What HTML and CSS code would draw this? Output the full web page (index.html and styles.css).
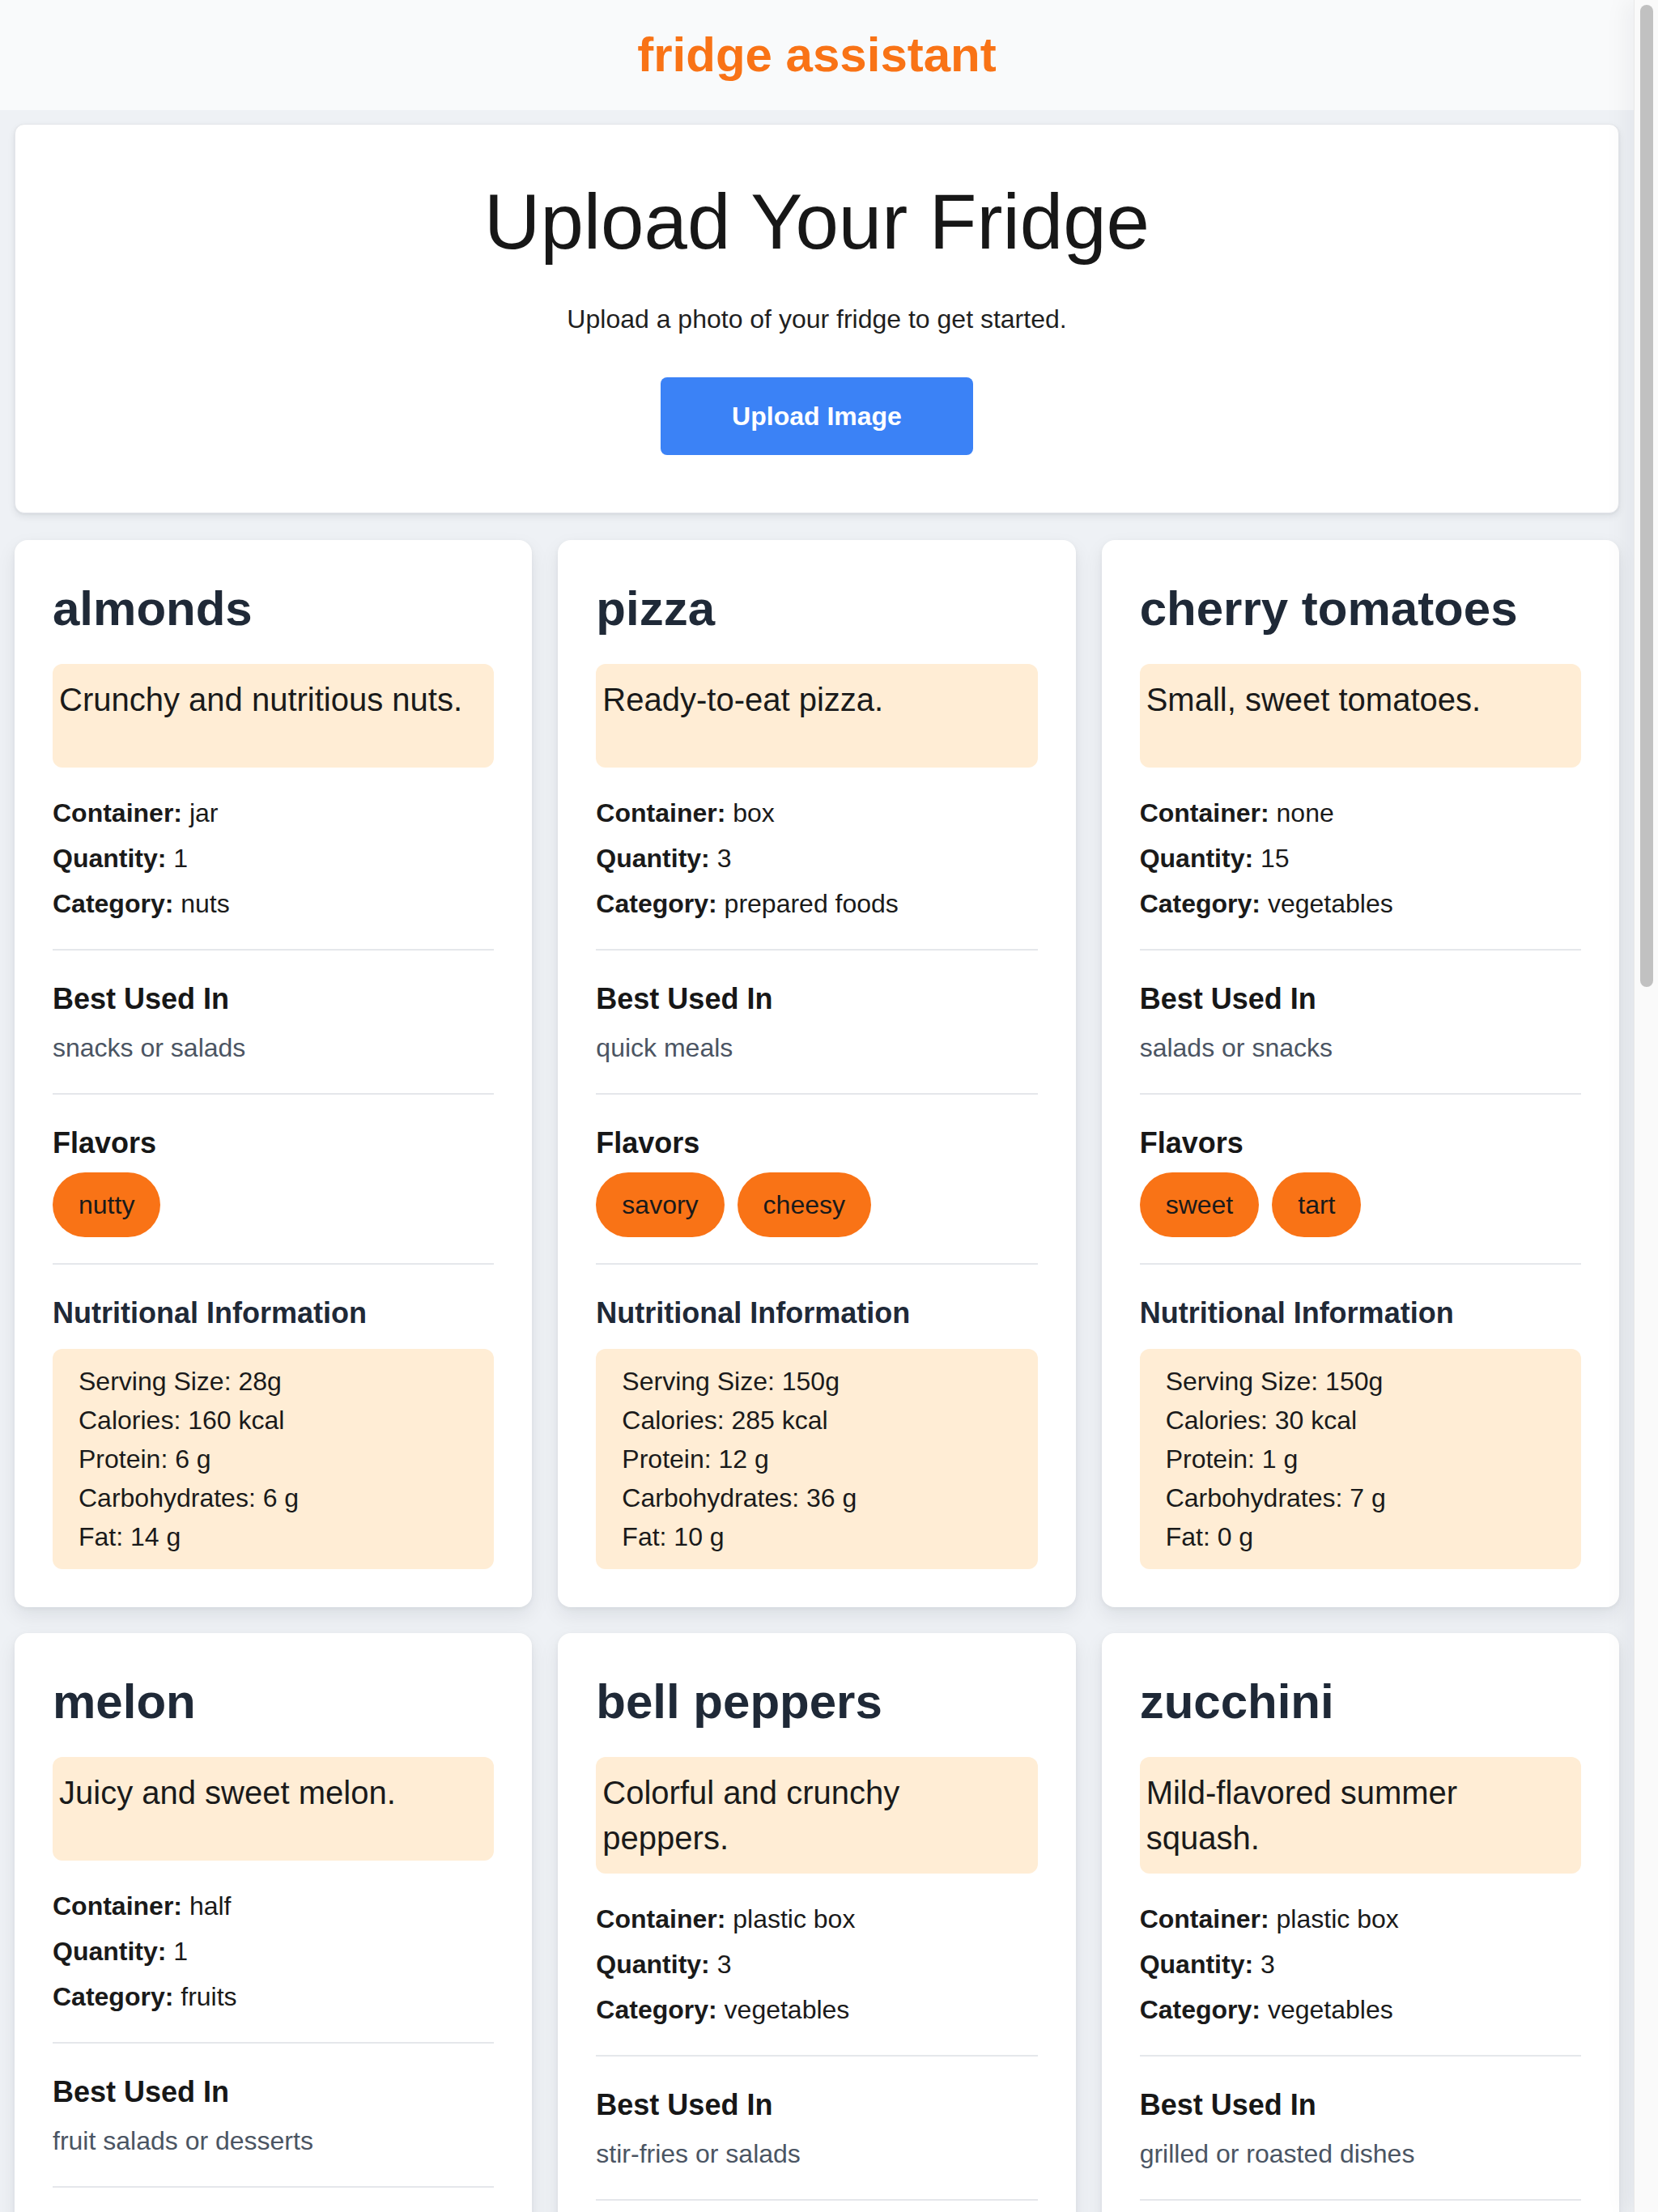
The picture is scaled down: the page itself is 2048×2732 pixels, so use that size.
FILE: index.html
```html
<!DOCTYPE html>
<html lang="en">
<head>
<meta charset="utf-8">
<title>fridge assistant</title>
<link rel="stylesheet" href="styles.css">
</head>
<body>
<header class="topbar">
  <h1 class="brand">fridge assistant</h1>
</header>
<main class="page">
  <section class="upload">
    <h2 class="upload-title">Upload Your Fridge</h2>
    <p class="upload-sub">Upload a photo of your fridge to get started.</p>
    <button class="btn" type="button">Upload Image</button>
  </section>

  <div class="grid">
    <article class="card">
      <h2 class="card-title">almonds</h2>
      <p class="desc">Crunchy and nutritious nuts.</p>
      <div class="details">
        <div><b>Container:</b> jar</div>
        <div><b>Quantity:</b> 1</div>
        <div><b>Category:</b> nuts</div>
      </div>
      <div class="section">
        <h3 class="sec-title">Best Used In</h3>
        <p class="uses">snacks or salads</p>
      </div>
      <div class="section">
        <h3 class="sec-title">Flavors</h3>
        <div class="pills"><span class="pill">nutty</span></div>
      </div>
      <div class="section last">
        <h3 class="sec-title nutri-title">Nutritional Information</h3>
        <ul class="nutri">
          <li>Serving Size: 28g</li>
          <li>Calories: 160 kcal</li>
          <li>Protein: 6 g</li>
          <li>Carbohydrates: 6 g</li>
          <li>Fat: 14 g</li>
        </ul>
      </div>
    </article>

    <article class="card">
      <h2 class="card-title">pizza</h2>
      <p class="desc">Ready-to-eat pizza.</p>
      <div class="details">
        <div><b>Container:</b> box</div>
        <div><b>Quantity:</b> 3</div>
        <div><b>Category:</b> prepared foods</div>
      </div>
      <div class="section">
        <h3 class="sec-title">Best Used In</h3>
        <p class="uses">quick meals</p>
      </div>
      <div class="section">
        <h3 class="sec-title">Flavors</h3>
        <div class="pills"><span class="pill">savory</span><span class="pill">cheesy</span></div>
      </div>
      <div class="section last">
        <h3 class="sec-title nutri-title">Nutritional Information</h3>
        <ul class="nutri">
          <li>Serving Size: 150g</li>
          <li>Calories: 285 kcal</li>
          <li>Protein: 12 g</li>
          <li>Carbohydrates: 36 g</li>
          <li>Fat: 10 g</li>
        </ul>
      </div>
    </article>

    <article class="card">
      <h2 class="card-title">cherry tomatoes</h2>
      <p class="desc">Small, sweet tomatoes.</p>
      <div class="details">
        <div><b>Container:</b> none</div>
        <div><b>Quantity:</b> 15</div>
        <div><b>Category:</b> vegetables</div>
      </div>
      <div class="section">
        <h3 class="sec-title">Best Used In</h3>
        <p class="uses">salads or snacks</p>
      </div>
      <div class="section">
        <h3 class="sec-title">Flavors</h3>
        <div class="pills"><span class="pill">sweet</span><span class="pill">tart</span></div>
      </div>
      <div class="section last">
        <h3 class="sec-title nutri-title">Nutritional Information</h3>
        <ul class="nutri">
          <li>Serving Size: 150g</li>
          <li>Calories: 30 kcal</li>
          <li>Protein: 1 g</li>
          <li>Carbohydrates: 7 g</li>
          <li>Fat: 0 g</li>
        </ul>
      </div>
    </article>

    <article class="card">
      <h2 class="card-title">melon</h2>
      <p class="desc">Juicy and sweet melon.</p>
      <div class="details">
        <div><b>Container:</b> half</div>
        <div><b>Quantity:</b> 1</div>
        <div><b>Category:</b> fruits</div>
      </div>
      <div class="section">
        <h3 class="sec-title">Best Used In</h3>
        <p class="uses">fruit salads or desserts</p>
      </div>
      <div class="section">
        <h3 class="sec-title">Flavors</h3>
        <div class="pills"><span class="pill">sweet</span><span class="pill">juicy</span></div>
      </div>
      <div class="section last">
        <h3 class="sec-title nutri-title">Nutritional Information</h3>
        <ul class="nutri">
          <li>Serving Size: 150g</li>
          <li>Calories: 50 kcal</li>
          <li>Protein: 1 g</li>
          <li>Carbohydrates: 12 g</li>
          <li>Fat: 0 g</li>
        </ul>
      </div>
    </article>

    <article class="card">
      <h2 class="card-title">bell peppers</h2>
      <p class="desc">Colorful and crunchy peppers.</p>
      <div class="details">
        <div><b>Container:</b> plastic box</div>
        <div><b>Quantity:</b> 3</div>
        <div><b>Category:</b> vegetables</div>
      </div>
      <div class="section">
        <h3 class="sec-title">Best Used In</h3>
        <p class="uses">stir-fries or salads</p>
      </div>
      <div class="section">
        <h3 class="sec-title">Flavors</h3>
        <div class="pills"><span class="pill">sweet</span><span class="pill">crisp</span></div>
      </div>
      <div class="section last">
        <h3 class="sec-title nutri-title">Nutritional Information</h3>
        <ul class="nutri">
          <li>Serving Size: 120g</li>
          <li>Calories: 30 kcal</li>
          <li>Protein: 1 g</li>
          <li>Carbohydrates: 7 g</li>
          <li>Fat: 0 g</li>
        </ul>
      </div>
    </article>

    <article class="card">
      <h2 class="card-title">zucchini</h2>
      <p class="desc">Mild-flavored summer squash.</p>
      <div class="details">
        <div><b>Container:</b> plastic box</div>
        <div><b>Quantity:</b> 3</div>
        <div><b>Category:</b> vegetables</div>
      </div>
      <div class="section">
        <h3 class="sec-title">Best Used In</h3>
        <p class="uses">grilled or roasted dishes</p>
      </div>
      <div class="section">
        <h3 class="sec-title">Flavors</h3>
        <div class="pills"><span class="pill">mild</span><span class="pill">earthy</span></div>
      </div>
      <div class="section last">
        <h3 class="sec-title nutri-title">Nutritional Information</h3>
        <ul class="nutri">
          <li>Serving Size: 200g</li>
          <li>Calories: 34 kcal</li>
          <li>Protein: 2 g</li>
          <li>Carbohydrates: 6 g</li>
          <li>Fat: 1 g</li>
        </ul>
      </div>
    </article>

    <article class="card">
      <h2 class="card-title">eggs</h2>
      <p class="desc">Fresh free-range eggs.</p>
      <div class="details">
        <div><b>Container:</b> carton</div>
        <div><b>Quantity:</b> 6</div>
        <div><b>Category:</b> dairy</div>
      </div>
      <div class="section">
        <h3 class="sec-title">Best Used In</h3>
        <p class="uses">breakfast or baking</p>
      </div>
      <div class="section">
        <h3 class="sec-title">Flavors</h3>
        <div class="pills"><span class="pill">rich</span></div>
      </div>
      <div class="section last">
        <h3 class="sec-title nutri-title">Nutritional Information</h3>
        <ul class="nutri">
          <li>Serving Size: 50g</li>
          <li>Calories: 72 kcal</li>
          <li>Protein: 6 g</li>
          <li>Carbohydrates: 0 g</li>
          <li>Fat: 5 g</li>
        </ul>
      </div>
    </article>

    <article class="card">
      <h2 class="card-title">milk</h2>
      <p class="desc">Whole cow's milk.</p>
      <div class="details">
        <div><b>Container:</b> bottle</div>
        <div><b>Quantity:</b> 1</div>
        <div><b>Category:</b> dairy</div>
      </div>
      <div class="section">
        <h3 class="sec-title">Best Used In</h3>
        <p class="uses">coffee or cereal</p>
      </div>
      <div class="section">
        <h3 class="sec-title">Flavors</h3>
        <div class="pills"><span class="pill">creamy</span></div>
      </div>
      <div class="section last">
        <h3 class="sec-title nutri-title">Nutritional Information</h3>
        <ul class="nutri">
          <li>Serving Size: 240ml</li>
          <li>Calories: 150 kcal</li>
          <li>Protein: 8 g</li>
          <li>Carbohydrates: 12 g</li>
          <li>Fat: 8 g</li>
        </ul>
      </div>
    </article>

    <article class="card">
      <h2 class="card-title">carrots</h2>
      <p class="desc">Crisp orange carrots.</p>
      <div class="details">
        <div><b>Container:</b> bag</div>
        <div><b>Quantity:</b> 5</div>
        <div><b>Category:</b> vegetables</div>
      </div>
      <div class="section">
        <h3 class="sec-title">Best Used In</h3>
        <p class="uses">soups or snacks</p>
      </div>
      <div class="section">
        <h3 class="sec-title">Flavors</h3>
        <div class="pills"><span class="pill">sweet</span><span class="pill">earthy</span></div>
      </div>
      <div class="section last">
        <h3 class="sec-title nutri-title">Nutritional Information</h3>
        <ul class="nutri">
          <li>Serving Size: 100g</li>
          <li>Calories: 41 kcal</li>
          <li>Protein: 1 g</li>
          <li>Carbohydrates: 10 g</li>
          <li>Fat: 0 g</li>
        </ul>
      </div>
    </article>

    <article class="card">
      <h2 class="card-title">cheddar cheese</h2>
      <p class="desc">Aged sharp cheese.</p>
      <div class="details">
        <div><b>Container:</b> wrapper</div>
        <div><b>Quantity:</b> 1</div>
        <div><b>Category:</b> dairy</div>
      </div>
      <div class="section">
        <h3 class="sec-title">Best Used In</h3>
        <p class="uses">sandwiches or pasta</p>
      </div>
      <div class="section">
        <h3 class="sec-title">Flavors</h3>
        <div class="pills"><span class="pill">sharp</span><span class="pill">salty</span></div>
      </div>
      <div class="section last">
        <h3 class="sec-title nutri-title">Nutritional Information</h3>
        <ul class="nutri">
          <li>Serving Size: 28g</li>
          <li>Calories: 113 kcal</li>
          <li>Protein: 7 g</li>
          <li>Carbohydrates: 0 g</li>
          <li>Fat: 9 g</li>
        </ul>
      </div>
    </article>

    <article class="card">
      <h2 class="card-title">yogurt</h2>
      <p class="desc">Plain Greek yogurt.</p>
      <div class="details">
        <div><b>Container:</b> cup</div>
        <div><b>Quantity:</b> 4</div>
        <div><b>Category:</b> dairy</div>
      </div>
      <div class="section">
        <h3 class="sec-title">Best Used In</h3>
        <p class="uses">breakfast or smoothies</p>
      </div>
      <div class="section">
        <h3 class="sec-title">Flavors</h3>
        <div class="pills"><span class="pill">tangy</span><span class="pill">creamy</span></div>
      </div>
      <div class="section last">
        <h3 class="sec-title nutri-title">Nutritional Information</h3>
        <ul class="nutri">
          <li>Serving Size: 170g</li>
          <li>Calories: 100 kcal</li>
          <li>Protein: 17 g</li>
          <li>Carbohydrates: 6 g</li>
          <li>Fat: 0 g</li>
        </ul>
      </div>
    </article>

    <article class="card">
      <h2 class="card-title">lettuce</h2>
      <p class="desc">Crisp green lettuce.</p>
      <div class="details">
        <div><b>Container:</b> bag</div>
        <div><b>Quantity:</b> 1</div>
        <div><b>Category:</b> vegetables</div>
      </div>
      <div class="section">
        <h3 class="sec-title">Best Used In</h3>
        <p class="uses">salads or wraps</p>
      </div>
      <div class="section">
        <h3 class="sec-title">Flavors</h3>
        <div class="pills"><span class="pill">fresh</span></div>
      </div>
      <div class="section last">
        <h3 class="sec-title nutri-title">Nutritional Information</h3>
        <ul class="nutri">
          <li>Serving Size: 85g</li>
          <li>Calories: 13 kcal</li>
          <li>Protein: 1 g</li>
          <li>Carbohydrates: 2 g</li>
          <li>Fat: 0 g</li>
        </ul>
      </div>
    </article>
  </div>
</main>
<div class="scrollbar" aria-hidden="true"><div class="scroll-thumb"></div></div>
</body>
</html>
```

FILE: styles.css
```css
body {
  margin: 0 30px 0 0;
  background: #eef1f5;
  font-family: "Liberation Sans", Arial, Helvetica, sans-serif;
  color: #1a1a1a;
}

.scrollbar {
  position: fixed;
  top: 0;
  right: 0;
  width: 29px;
  height: 100%;
  background: #fafafa;
  border-left: 1px solid #e8e8e8;
  box-shadow: -10px 0 28px rgba(15, 23, 42, 0.05);
}

.scroll-thumb {
  position: absolute;
  top: 6px;
  left: 7px;
  width: 16px;
  height: 1213px;
  border-radius: 8px;
  background: #c1c1c1;
}

.topbar {
  background: #f9fafb;
  padding: 32px 0;
  text-align: center;
}

.brand {
  margin: 0;
  font-size: 60px;
  line-height: 72px;
  font-weight: 700;
  color: #f97316;
}

.page {
  padding: 17px 18px 48px;
}

.upload {
  background: #ffffff;
  border: 1px solid #e5e7eb;
  border-radius: 12px;
  padding: 72px 48px 71px;
  text-align: center;
  box-shadow: 0 4px 10px rgba(15, 23, 42, 0.08), 0 1px 3px rgba(15, 23, 42, 0.06);
}

.upload-title {
  margin: 0 0 48px;
  font-size: 96px;
  line-height: 96px;
  font-weight: 400;
  color: #171717;
}

.upload-sub {
  margin: 0 0 48px;
  font-size: 32px;
  line-height: 48px;
  color: #1f1f1f;
}

.btn {
  display: inline-block;
  border: 0;
  border-radius: 8px;
  background: #3b82f6;
  color: #ffffff;
  font-family: inherit;
  font-size: 32px;
  line-height: 48px;
  font-weight: 700;
  padding: 24px 88px;
  cursor: pointer;
}

.grid {
  display: grid;
  grid-template-columns: repeat(3, minmax(0, 1fr));
  gap: 32px;
  margin-top: 33px;
}

.card {
  background: #ffffff;
  border-radius: 16px;
  padding: 49px 47px 47px;
  box-shadow: 0 10px 24px rgba(15, 23, 42, 0.08), 0 2px 6px rgba(15, 23, 42, 0.05);
}

.card-title {
  margin: 0 0 32px;
  font-size: 60px;
  line-height: 72px;
  font-weight: 700;
  color: #1f2937;
}

.desc {
  margin: 0;
  box-sizing: border-box;
  min-height: 128px;
  padding: 16px 8px;
  background: #ffedd5;
  border-radius: 12px;
  font-size: 40px;
  line-height: 56px;
  color: #1a1a1a;
}

.details {
  display: flex;
  flex-direction: column;
  gap: 8px;
  padding: 32px 0;
  border-bottom: 2px solid #e5e7eb;
  font-size: 32px;
  line-height: 48px;
}

.section {
  padding: 32px 0;
  border-bottom: 2px solid #e5e7eb;
}

.section.last {
  border-bottom: 0;
  padding-bottom: 0;
}

.sec-title {
  margin: 0 0 8px;
  font-size: 36px;
  line-height: 56px;
  font-weight: 700;
  color: #171717;
}

.nutri-title {
  margin-bottom: 16px;
  color: #1f2937;
}

.uses {
  margin: 0;
  font-size: 32px;
  line-height: 48px;
  color: #4b5563;
}

.pills {
  display: flex;
  flex-wrap: wrap;
  gap: 16px;
}

.pill {
  background: #f97316;
  border-radius: 9999px;
  padding: 16px 32px;
  font-size: 32px;
  line-height: 48px;
  color: #1a1a1a;
}

.nutri {
  list-style: none;
  margin: 0;
  padding: 16px 32px;
  background: #ffedd5;
  border-radius: 12px;
  font-size: 32px;
  line-height: 48px;
  color: #1a1a1a;
}
```
